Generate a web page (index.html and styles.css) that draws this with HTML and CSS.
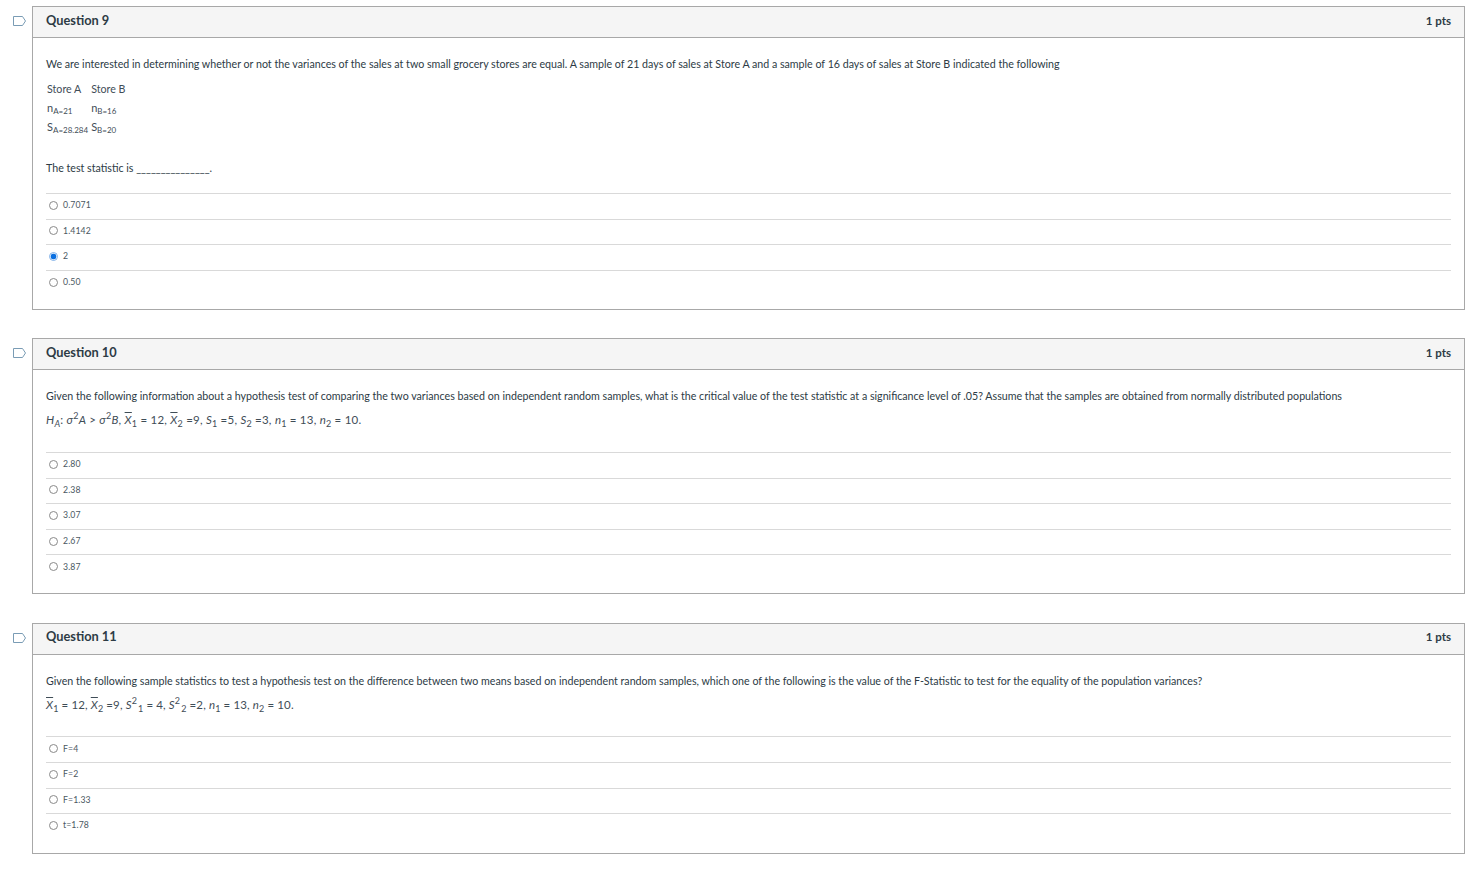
FILE: index.html
```html
<!DOCTYPE html>
<html lang="en">
<head>
<meta charset="utf-8">
<title>Quiz</title>
<link rel="stylesheet" href="styles.css">
</head>
<body>
<main class="quiz">

<section class="item item-9">
  <svg class="flag" viewBox="0 0 13 10" width="13" height="10"><path d="M.5.5H9.5L12.5 5L9.5 9.5H.5Z" fill="none" stroke="#7a9cb5" stroke-width="1"/></svg>
  <article class="card">
    <header class="head"><h2 class="title">Question 9</h2><span class="pts">1 pts</span></header>
    <div class="body">
      <p class="text">We are interested in determining whether or not the variances of the sales at two small grocery stores are equal. A sample of 21 days of sales at Store A and a sample of 16 days of sales at Store B indicated the following</p>
      <table class="stores">
        <tr class="r1"><td class="c1">Store A</td><td>Store B</td></tr>
        <tr class="r2"><td class="c1"><span class="big">n</span><sub>A</sub><span class="tiny">=21</span></td><td><span class="big">n</span><sub>B</sub><span class="tiny">=16</span></td></tr>
        <tr class="r3"><td class="c1"><span class="big">S</span><sub>A</sub><span class="tiny">=28.284</span></td><td><span class="big">S</span><sub>B</sub><span class="tiny">=20</span></td></tr>
      </table>
      <p class="text stat">The test statistic is _______________.</p>
      <ul class="answers">
        <li class="a"><span class="radio"></span>0.7071</li>
        <li class="a"><span class="radio"></span>1.4142</li>
        <li class="a"><span class="radio on"></span>2</li>
        <li class="a"><span class="radio"></span>0.50</li>
      </ul>
    </div>
  </article>
</section>

<section class="item item-10">
  <svg class="flag" viewBox="0 0 13 10" width="13" height="10"><path d="M.5.5H9.5L12.5 5L9.5 9.5H.5Z" fill="none" stroke="#7a9cb5" stroke-width="1"/></svg>
  <article class="card">
    <header class="head"><h2 class="title">Question 10</h2><span class="pts">1 pts</span></header>
    <div class="body">
      <p class="text">Given the following information about a hypothesis test of comparing the two variances based on independent random samples, what is the critical value of the test statistic at a significance level of .05? Assume that the samples are obtained from normally distributed populations</p>
      <p class="math math-10"><i>H<sub>A</sub></i>: <i>σ</i><sup>2</sup><i>A</i> &gt; <i>σ</i><sup>2</sup><i>B</i>, <i class="bar">X</i><sub>1</sub> = 12, <i class="bar">X</i><sub>2</sub> =9, <i>S</i><sub>1</sub> =5, <i>S</i><sub>2</sub> =3, <i>n</i><sub>1</sub> = 13, <i>n</i><sub>2</sub> = 10.</p>
      <ul class="answers">
        <li class="a"><span class="radio"></span>2.80</li>
        <li class="a"><span class="radio"></span>2.38</li>
        <li class="a"><span class="radio"></span>3.07</li>
        <li class="a"><span class="radio"></span>2.67</li>
        <li class="a"><span class="radio"></span>3.87</li>
      </ul>
    </div>
  </article>
</section>

<section class="item item-11">
  <svg class="flag" viewBox="0 0 13 10" width="13" height="10"><path d="M.5.5H9.5L12.5 5L9.5 9.5H.5Z" fill="none" stroke="#7a9cb5" stroke-width="1"/></svg>
  <article class="card">
    <header class="head"><h2 class="title">Question 11</h2><span class="pts">1 pts</span></header>
    <div class="body">
      <p class="text">Given the following sample statistics to test a hypothesis test on the difference between two means based on independent random samples, which one of the following is the value of the F-Statistic to test for the equality of the population variances?</p>
      <p class="math math-11"><i class="bar">X</i><sub>1</sub> = 12, <i class="bar">X</i><sub>2</sub> =9, <i>S</i><sup>2</sup><sub class="wide">1</sub> = 4, <i>S</i><sup>2</sup><sub class="wide">2</sub> =2, <i>n</i><sub>1</sub> = 13, <i>n</i><sub>2</sub> = 10.</p>
      <ul class="answers">
        <li class="a"><span class="radio"></span>F=4</li>
        <li class="a"><span class="radio"></span>F=2</li>
        <li class="a"><span class="radio"></span>F=1.33</li>
        <li class="a"><span class="radio"></span>t=1.78</li>
      </ul>
    </div>
  </article>
</section>

</main>
</body>
</html>
```

FILE: styles.css
```css
html, body { margin: 0; padding: 0; background: #fff; }
body { font-family: Lato, "Open Sans", sans-serif; color: #2d3b45; }
.quiz { padding: 6px 9px 0 13px; display: flex; flex-direction: column; }
.item { display: flex; align-items: flex-start; }
.item-9 { margin-bottom: 28px; }
.item-10 { margin-bottom: 28.6px; }
.flag { flex: none; width: 13px; height: 10px; margin: 10px 6px 0 0; }
.card { flex: 1; border: 1px solid #a8a8a8; box-sizing: border-box; }
.head { display: flex; justify-content: space-between; align-items: center; height: 30px; box-sizing: content-box; padding: 0 13px; background: #f5f5f5; border-bottom: 1px solid #a8a8a8; }
.title { margin: 0 0 5px; font-size: 12.8px; font-weight: 700; color: #2d3b45; }
.pts { margin-bottom: 4px; font-size: 11.5px; font-weight: 700; color: #2d3b45; }
.body { padding: 0 13px; }
.text { margin: 0; padding-top: 18px; font-size: 10.67px; line-height: 15px; color: #2d3b45; white-space: nowrap; }
.stores { border-collapse: collapse; margin: 10px 0 0 1px; font-size: 10.67px; color: #3f4d57; }
.stores td { padding: 0; white-space: nowrap; vertical-align: middle; }
.stores .c1 { padding-right: 3px; min-width: 41px; }
.r1 td { height: 15px; line-height: 15px; }
.stores .r2 td { height: 22px; line-height: 18px; padding-top: 2px; box-sizing: border-box; }
.r3 td { height: 18px; line-height: 18px; }
.big { font-size: 11px; }
.stores sub { font-size: 8px; vertical-align: -2px; line-height: 0; }
.tiny { font-size: 8px; vertical-align: -2px; line-height: 0; }
.stat { padding-top: 24px; }
.math { margin: 0; padding-top: 9px; font-size: 11.5px; line-height: 15px; color: #3f4d57; white-space: nowrap; letter-spacing: .22px; }
.math-10 { padding-bottom: 6.6px; }
.math-11 { padding-bottom: 6.4px; letter-spacing: .12px; }
.math sub, .math sup { font-size: 9px; line-height: 0; }
.math sub.wide { padding-left: 1px; }
.bar { text-decoration: overline; }
.answers { list-style: none; margin: 18px 0 0; padding: 0 0 14px; }
.item-10 .answers { padding-bottom: 13.4px; }
.a { display: flex; align-items: center; height: 25.6px; padding: 0 0 3px 3px; box-sizing: border-box; border-top: 1px solid #d9d9d9; font-size: 8.7px; letter-spacing: .1px; color: #4a5761; }
.radio { flex: none; width: 7px; height: 7px; margin: 1px 5px 0 0; border: 1px solid #8a8a8a; border-radius: 50%; background: #fff; }
.radio.on { border-color: #7fb0e8; background: radial-gradient(circle, #0a6fe0 0 2.6px, #fff 3.2px); }
```
